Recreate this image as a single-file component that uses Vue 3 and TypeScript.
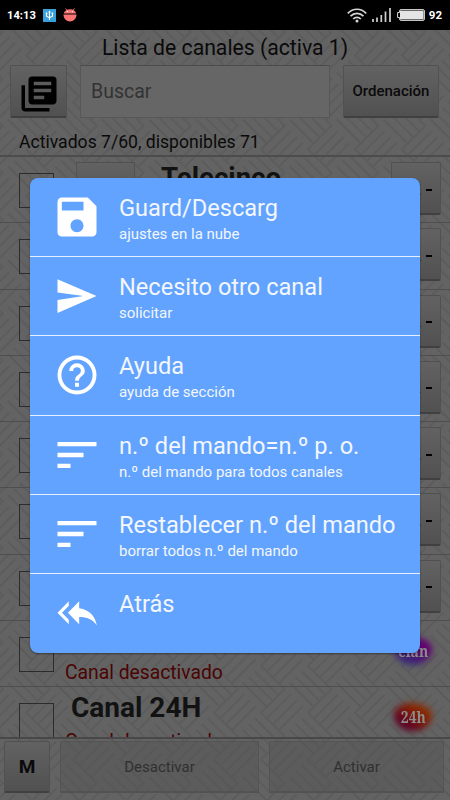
<script setup lang="ts">
interface MenuItem {
  icon: string
  title: string
  subtitle?: string
}

interface Channel {
  id: number
  name: string
  active: boolean
  logo?: string
  logoText?: string
}

const icons: Record<string, string> = {
  save: 'M17 3H5a2 2 0 0 0-2 2v14a2 2 0 0 0 2 2h14c1.1 0 2-.9 2-2V7l-4-4zm-5 16c-1.66 0-3-1.34-3-3s1.34-3 3-3 3 1.34 3 3-1.34 3-3 3zm3-10H5V5h10v4z',
  send: 'M3 19.8 21 12 3 4.3v6.1L15 12 3 13.8z',
  help: 'M11.1 17.4h1.8v-1.8h-1.8v1.8zM12 3a9 9 0 1 0 0 18 9 9 0 0 0 0-18zm0 16.2a7.2 7.2 0 1 1 0-14.4 7.2 7.2 0 0 1 0 14.4zm0-12.6a3.6 3.6 0 0 0-3.6 3.6h1.8a1.8 1.8 0 1 1 3.6 0c0 1.8-2.7 1.58-2.7 4.5h1.8c0-2.03 2.7-2.25 2.7-4.5A3.6 3.6 0 0 0 12 6.6z',
  sort: 'M3 18h6v-2H3v2zM3 6v2h18V6H3zm0 7h12v-2H3v2z',
  back: 'M8.2 8.7V6.6L3 11.9l5.2 5.3v-2.1L5.1 11.9zM13 9.8V6.6l-5.2 5.3 5.2 5.3v-3.3c3.6 0 6.2 1.1 8.2 3.9-.8-3.9-3-7.3-8.2-8z',
}

const menu: MenuItem[] = [
  { icon: 'save', title: 'Guard/Descarg', subtitle: 'ajustes en la nube' },
  { icon: 'send', title: 'Necesito otro canal', subtitle: 'solicitar' },
  { icon: 'help', title: 'Ayuda', subtitle: 'ayuda de sección' },
  { icon: 'sort', title: 'n.º del mando=n.º p. o.', subtitle: 'n.º del mando para todos canales' },
  { icon: 'sort', title: 'Restablecer n.º del mando', subtitle: 'borrar todos n.º del mando' },
  { icon: 'back', title: 'Atrás' },
]

const channels: Channel[] = [
  { id: 1, name: 'Telecinco', active: true },
  { id: 2, name: '', active: true },
  { id: 3, name: '', active: true },
  { id: 4, name: '', active: true },
  { id: 5, name: '', active: true },
  { id: 6, name: '', active: true },
  { id: 7, name: '', active: true },
  { id: 8, name: '', active: false, logo: 'clan', logoText: 'clan' },
  { id: 9, name: 'Canal 24H', active: false, logo: 'news', logoText: '24h' },
]
</script>

<template>
  <div class="screen">
    <svg class="weave" width="450" height="770">
      <defs>
        <pattern id="weave" width="66.4" height="66.4" patternUnits="userSpaceOnUse" patternTransform="translate(284.5 658) rotate(45)">
          <g stroke="#5b5b5b" stroke-width="1.8">
            <path d="M.9 0v33.2M9.2 0v33.2M17.5 0v33.2M25.8 0v33.2" />
            <path d="M34.1 33.2v33.2M42.4 33.2v33.2M50.7 33.2v33.2M59 33.2v33.2" />
            <path d="M33.2 .9h33.2M33.2 9.2h33.2M33.2 17.5h33.2M33.2 25.8h33.2" />
            <path d="M0 34.1h33.2M0 42.4h33.2M0 50.7h33.2M0 59h33.2" />
          </g>
        </pattern>
      </defs>
      <rect width="450" height="770" fill="url(#weave)" />
    </svg>

    <header class="status">
      <span class="clock">14:13</span>
      <svg class="usb" width="13" height="13" viewBox="0 0 13 13">
        <rect width="13" height="13" fill="#38a0dc" />
        <path d="M6.5 2v9M3.5 4v3.2l3 1.5 3-1.5V4" fill="none" stroke="#fff" stroke-width="1.1" />
        <path d="M5.2 3.4 6.5 1.6l1.3 1.8zM2.8 3.4h1.5v1.5H2.8zM8.7 3.4h1.5v1.5H8.7z" fill="#fff" />
      </svg>
      <svg class="bug" width="14" height="14" viewBox="0 0 14 14">
        <path d="M2.6.5 4 2.4M11.4.5 10 2.4" stroke="#fb7474" stroke-width="1" />
        <path d="M.8 5.6C1.3 2.8 3.8 1.2 7 1.2s5.7 1.6 6.2 4.4zM.5 6.5h13c0 4-2.9 7-6.5 7S.5 10.5.5 6.5z" fill="#fb7474" />
        <circle cx="4.5" cy="3.6" r=".7" fill="#fff" /><circle cx="9.5" cy="3.6" r=".7" fill="#fff" />
      </svg>
      <span class="spacer"></span>
      <svg class="wifi" width="20" height="15" viewBox="0 0 20 15">
        <g fill="none" stroke="#d4d4d4" stroke-width="1.7">
          <path d="M.8 5.3C6-.1 14-.1 19.2 5.3M3.5 8.2C7.2 4.4 12.8 4.4 16.5 8.2M6.2 11c2.2-2.3 5.4-2.3 7.6 0" />
        </g>
        <circle cx="10" cy="12.9" r="1.5" fill="#d4d4d4" />
      </svg>
      <svg class="signal" width="19" height="14" viewBox="0 0 19 14">
        <path d="M1 14v-3M5 14v-4.5M9.3 14V7M13.5 14V3.5M18 14V0" stroke="#cfcfcf" stroke-width="1.7" />
      </svg>
      <svg class="battery" width="28" height="12" viewBox="0 0 28 12">
        <path d="M4 .6h22a1.4 1.4 0 0 1 1.4 1.4v8a1.4 1.4 0 0 1-1.4 1.4H4A1.4 1.4 0 0 1 2.6 10V8.5H.6v-5h2V2A1.4 1.4 0 0 1 4 .6z" fill="#000" stroke="#dcdcdc" stroke-width="1" />
        <rect x="3" y="1.6" width="23.6" height="8.8" fill="#e4e4e4" />
      </svg>
      <span class="level">92</span>
    </header>

    <h1 class="title"><span>Lista de canales (activa 1)</span></h1>

    <div class="toolbar">
      <div class="btn library">
        <svg width="42" height="42" viewBox="0 0 24 24">
          <path d="M4 7H2v13c0 1.1.9 2 2 2h14v-2H4V7z" />
          <path fill-rule="evenodd" d="M20 2H8a2 2 0 0 0-2 2v12c0 1.1.9 2 2 2h12c1.1 0 2-.9 2-2V4a2 2 0 0 0-2-2zM9 5h10v2H9zM9 9h10v2H9zM9 13h6v2H9z" />
        </svg>
      </div>
      <div class="search">Buscar</div>
      <div class="btn order">Ordenación</div>
    </div>

    <p class="summary"><span>Activados 7/60, disponibles 71</span></p>

    <main class="list">
      <div v-for="c in channels" :key="c.id" class="row">
        <span class="check"></span>
        <template v-if="c.active">
          <span class="btn thumb"></span>
          <strong class="name centered">{{ c.name }}</strong>
          <span class="btn number"><i>2</i><b></b></span>
        </template>
        <template v-else>
          <div class="info">
            <strong class="name">{{ c.name }}</strong>
            <span class="off">Canal desactivado</span>
          </div>
          <span class="logo" :class="c.logo"><span>{{ c.logoText }}</span></span>
        </template>
      </div>
    </main>

    <footer class="actions">
      <div class="btn mode">M</div>
      <div class="flat">Desactivar</div>
      <div class="flat">Activar</div>
    </footer>

    <section class="dialog">
      <div v-for="m in menu" :key="m.title" class="item">
        <svg width="52" height="52" viewBox="0 0 24 24"><path :d="icons[m.icon]" /></svg>
        <div class="label">
          <div class="head">{{ m.title }}</div>
          <div v-if="m.subtitle" class="sub">{{ m.subtitle }}</div>
        </div>
      </div>
    </section>
  </div>
</template>

<style>
body {
  margin: 0;
  overflow: hidden;
}
</style>

<style scoped>
.screen {
  position: relative;
  width: 450px;
  height: 800px;
  display: flex;
  flex-direction: column;
  overflow: hidden;
  background: #636363;
  font-family: Roboto, sans-serif;
  color: #0a0a0a;
  isolation: isolate;
}
.screen * {
  box-sizing: border-box;
}
.weave {
  position: absolute;
  z-index: -1;
  top: 30px;
  left: 0;
}
.status {
  flex: none;
  height: 30px;
  padding: 0 8px 0 7px;
  display: flex;
  align-items: center;
  background: #000;
  color: #fff;
  font-weight: 700;
  font-size: 11.5px;
}
.clock {
  width: 36px;
  font-size: 11.2px;
  white-space: nowrap;
}
.usb {
  margin-right: 7px;
}
.spacer {
  flex: 1;
}
.wifi {
  margin-right: 5px;
}
.signal {
  margin-right: 6px;
}
.battery {
  margin-right: 4px;
}
.title {
  flex: none;
  height: 35px;
  margin: 0;
  text-align: center;
  font-weight: 400;
  font-size: 21.2px;
  line-height: 36px;
}
.toolbar {
  flex: none;
  height: 52px;
  display: grid;
  grid-template-columns: 57px 250px 96px;
  column-gap: 13px;
  padding-left: 10px;
}
.btn {
  border: 1px solid #515151;
  border-top-color: #505050;
  border-bottom: 2px solid #404040;
  border-radius: 2px;
  background: linear-gradient(#626262, #515151);
  display: flex;
  align-items: center;
  justify-content: center;
}
.library svg {
  margin: 5px 0 0 1px;
}
.search {
  border: 1px solid #575757;
  border-top-color: #4c4c4c;
  background: #666;
  padding-left: 10px;
  font-size: 19.5px;
  line-height: 51px;
  color: #333;
}
.order {
  font-size: 15px;
  font-weight: 500;
}
.summary {
  flex: none;
  margin: 0;
  height: 40px;
  padding: 10px 0 0 19px;
  font-size: 17.6px;
  line-height: 30px;
  border-bottom: 2px solid #4c4c4c;
}
.list {
  flex: none;
  height: 582px;
  overflow: hidden;
  border-bottom: 2px solid #484848;
}
.row {
  height: 66.3px;
  display: flex;
  padding: 0 9px 0 19px;
  border-bottom: 1px solid #4e4e4e;
}
.check {
  flex: none;
  width: 35px;
  height: 35px;
  margin-top: 16px;
  border: 1.5px solid #2c2c2c;
}
.thumb {
  flex: none;
  width: 59px;
  height: 53px;
  margin: 5px 0 0 22px;
}
.name {
  font-size: 28px;
  line-height: 32px;
  height: 32px;
  color: #121212;
  white-space: nowrap;
}
.centered {
  flex: 1;
  padding: 5px 0 0 26px;
  font-size: 27.6px;
}
.number {
  flex: none;
  width: 50px;
  height: 53px;
  margin-top: 5px;
  justify-content: flex-end;
  padding-right: 8px;
  gap: 5px;
}
.number i {
  font-style: normal;
  font-size: 18px;
  color: #241a00;
}
.number b {
  width: 6px;
  height: 2px;
  margin-top: 3px;
  background: #000;
}
.info {
  flex: 1;
  display: flex;
  flex-direction: column;
  padding: 5px 0 0 11px;
}
.info .name {
  padding-left: 6px;
}
.off {
  font-size: 19.3px;
  line-height: 26px;
  margin-top: 5px;
  color: #4a0404;
}
.logo {
  position: relative;
  width: 48px;
  height: 34px;
  margin: 13px 4px 0 0;
  display: flex;
  align-items: center;
  justify-content: center;
  font: 700 17px "Noto Serif", "DejaVu Serif", serif;
  color: #8b8b8b;
}
.logo span {
  position: relative;
  top: -1px;
  transform: scaleX(0.82);
}
.logo::before {
  content: "";
  position: absolute;
  inset: 3px 5px 3px 5px;
  border-radius: 45% 55% 50% 50% / 45% 45% 60% 60%;
  filter: blur(3px);
}
.clan::before {
  background: linear-gradient(20deg, #352a78 20%, #620070 60%);
}
.news::before {
  background: linear-gradient(35deg, #5d0026 25%, #882200 65%, #8a4210);
}
.actions {
  flex: 1;
  display: grid;
  grid-template-columns: 46px 200px 176px;
  grid-template-rows: 52px;
  column-gap: 9px;
  padding: 2px 0 0 4px;
}
.actions .flat {
  margin-left: 1px;
}
.mode {
  font-size: 19px;
  font-weight: 700;
}
.flat {
  border: 1px solid #545454;
  border-bottom: 2px solid #525252;
  background: rgba(82, 82, 82, 0.4);
  display: flex;
  align-items: center;
  justify-content: center;
  font-size: 15px;
  color: #303030;
}
.dialog {
  position: absolute;
  top: 178px;
  left: 30px;
  width: 390px;
  height: 475px;
  border-radius: 8px;
  background: #62a3ff;
  color: #f3f6fb;
  display: grid;
  grid-template-rows: repeat(6, 79.2px);
  overflow: hidden;
  box-shadow: 0 1px 2px rgba(0, 0, 0, 0.4);
}
.item {
  display: flex;
  padding-left: 21.2px;
  border-bottom: 1.5px solid #e8f0ff;
}
.item:last-child {
  border-bottom: 0;
}
.item svg {
  flex: none;
  margin-top: 13px;
  fill: #fff;
}
.label {
  padding: 15px 0 0 15.8px;
  white-space: nowrap;
}
.head {
  font-size: 23.6px;
  line-height: 30px;
}
.sub {
  font-size: 15px;
  line-height: 22px;
}
</style>
